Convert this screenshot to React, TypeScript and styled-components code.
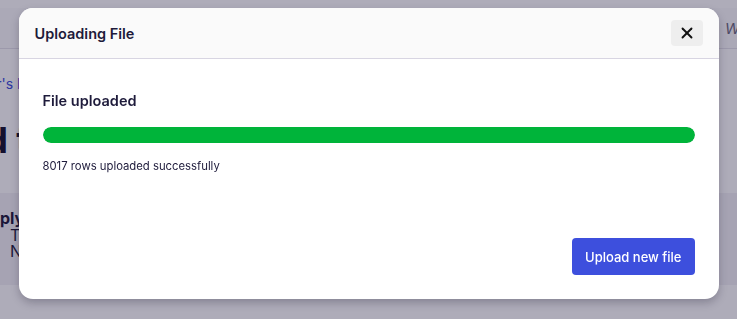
import React from 'react';
import styled, { createGlobalStyle } from 'styled-components';
import { FiX } from 'react-icons/fi';

const GlobalStyle = createGlobalStyle`
  html, body {
    margin: 0;
    padding: 0;
    background: #ffffff;
    font-family: Inter, "Noto Sans", sans-serif;
    color: #1e1b3b;
  }
`;

const Page = styled.div`
  width: 737px;
  height: 319px;
  overflow: hidden;
  background: #ffffff;
  display: flex;
  flex-direction: column;
`;

const TopBar = styled.div`
  height: 40px;
  margin-top: 8px;
  border-bottom: 1px solid #e4e2ea;
  display: flex;
  justify-content: flex-end;
  align-items: center;
  background: #fbfbfc;
`;

const Search = styled.div`
  width: 12px;
  padding-left: 6px;
  overflow: hidden;
  font-style: italic;
  font-size: 15px;
  color: #6d6a80;
  white-space: nowrap;
`;

const Content = styled.div`
  display: flex;
  flex-direction: column;
`;

const Crumb = styled.a`
  margin: 26px 0 0 -47px;
  font-size: 14px;
  color: #3b4fdc;
  white-space: nowrap;
`;

const Heading = styled.h1`
  margin: 26px 0 0 -117px;
  font-size: 36px;
  line-height: 44px;
  font-weight: 700;
  white-space: nowrap;
  color: #14122b;
`;

const Panel = styled.div`
  margin-top: 31px;
  height: 92px;
  background: #f3f2f6;
  display: flex;
  flex-direction: column;
  padding-top: 16px;
  box-sizing: border-box;
`;

const PanelTitle = styled.div`
  margin-left: -22px;
  font-size: 16px;
  line-height: 18px;
  font-weight: 700;
  white-space: nowrap;
`;

const PanelLine = styled.div`
  margin-left: 10px;
  font-size: 16px;
  line-height: 16px;
  white-space: nowrap;
`;

const Overlay = styled.div`
  position: fixed;
  inset: 0;
  background: rgba(24, 17, 54, 0.35);
  display: flex;
  justify-content: center;
  align-items: flex-start;
  padding-top: 8px;
`;

const Modal = styled.div`
  width: 700px;
  height: 291px;
  background: #ffffff;
  border-radius: 14px;
  box-shadow: 0 4px 8px rgba(20, 15, 40, 0.25);
  overflow: hidden;
  display: flex;
  flex-direction: column;
`;

const Header = styled.div`
  height: 50px;
  flex-shrink: 0;
  background: #fafafa;
  border-bottom: 1px solid #d8d5e2;
  display: flex;
  align-items: center;
  justify-content: space-between;
  padding: 0 16px;
`;

const Title = styled.div`
  font-size: 14.5px;
  font-weight: 600;
  color: #1e1b3b;
`;

const CloseButton = styled.button`
  width: 32px;
  height: 26px;
  border: none;
  border-radius: 4px;
  background: #eeeeee;
  display: inline-flex;
  align-items: center;
  justify-content: center;
  padding: 0;
  color: #111111;
  font-size: 18px;
`;

const Body = styled.div`
  flex: 1;
  padding: 32px 24px 0;
  display: flex;
  flex-direction: column;
`;

const Status = styled.div`
  font-size: 14.5px;
  line-height: 20px;
  font-weight: 600;
  color: #1e1b3b;
`;

const Track = styled.div`
  margin-top: 16px;
  height: 16px;
  border-radius: 8px;
  background: #e8e8ee;
  overflow: hidden;
`;

const Fill = styled.div`
  height: 100%;
  background: #00b43a;
  border-radius: 8px;
`;

const Note = styled.div`
  margin-top: 16px;
  font-size: 11.3px;
  line-height: 14px;
  color: #1e1b3b;
`;

const Footer = styled.div`
  display: flex;
  justify-content: flex-end;
  padding: 0 24px 24px;
`;

const PrimaryButton = styled.button`
  height: 37px;
  padding: 0 13px;
  border: none;
  border-radius: 4px;
  background: #3d4fdd;
  color: #ffffff;
  font-family: Inter, "Noto Sans", sans-serif;
  font-size: 13px;
  font-weight: 500;
`;

function App() {
  const progress = 100;
  return (
    <>
      <GlobalStyle />
      <Page>
        <TopBar>
          <Search>What</Search>
        </TopBar>
        <Content>
          <Crumb>Partner's Files</Crumb>
          <Heading>Upload to</Heading>
          <Panel>
            <PanelTitle>Apply</PanelTitle>
            <PanelLine>T</PanelLine>
            <PanelLine>N</PanelLine>
          </Panel>
        </Content>
      </Page>
      <Overlay>
        <Modal>
          <Header>
            <Title>Uploading File</Title>
            <CloseButton aria-label="Close">
              <FiX strokeWidth={2.5} />
            </CloseButton>
          </Header>
          <Body>
            <Status>File uploaded</Status>
            <Track>
              <Fill style={{ width: `${progress}%` }} />
            </Track>
            <Note>8017 rows uploaded successfully</Note>
          </Body>
          <Footer>
            <PrimaryButton>Upload new file</PrimaryButton>
          </Footer>
        </Modal>
      </Overlay>
    </>
  );
}

export default App;
